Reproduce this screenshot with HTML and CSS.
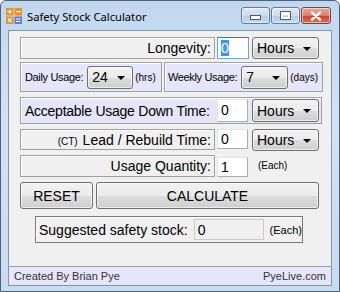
FILE: index.html
```html
<!DOCTYPE html>
<html>
<head>
<meta charset="utf-8">
<title>Safety Stock Calculator</title>
<link rel="stylesheet" href="styles.css">
</head>
<body>
<div class="window">
  <div class="titlebar">
    <svg class="appicon" width="16" height="16" viewBox="0 0 16 16">
      <rect x="0" y="0" width="7.5" height="7.5" fill="#e8902a"/>
      <rect x="8.5" y="0" width="7.5" height="7.5" fill="#e8902a"/>
      <rect x="0" y="8.5" width="7.5" height="7.5" fill="#e8902a"/>
      <rect x="8.5" y="8.5" width="7.5" height="7.5" fill="#6a78c8"/>
      <path d="M3.7 1.5v4.5M1.5 3.7h4.5" stroke="#fff" stroke-width="1.2"/>
      <path d="M10 3.7h4.5" stroke="#fff" stroke-width="1.2"/>
      <path d="M2 10.5l3.5 3.5M5.5 10.5l-3.5 3.5" stroke="#fff" stroke-width="1.2"/>
      <path d="M10 11h4.5M10 13.5h4.5" stroke="#fff" stroke-width="1.2"/>
    </svg>
    <span class="title">Safety Stock Calculator</span>
    <div class="caption-buttons">
      <div class="cbtn cmin"><span class="min-glyph"></span></div>
      <div class="cbtn cmax"><span class="max-glyph"></span></div>
      <div class="cbtn cclose">
        <svg width="12" height="10" viewBox="0 0 12 10"><path d="M2 1.5l8 7M10 1.5l-8 7" stroke="#fff" stroke-width="2.4" stroke-linecap="round"/></svg>
      </div>
    </div>
  </div>
  <div class="client">
    <div class="form">
      <div class="row r1">
        <div class="panel lpanel"><span class="lbl">Longevity:</span></div>
        <div class="textbox focused"><span class="sel">0</span></div>
        <div class="combo hours">Hours<span class="arrow"></span></div>
      </div>
      <div class="row r2">
        <div class="panel lav p-daily">
          <span class="slbl">Daily Usage:</span>
          <div class="combo small c-daily">24<span class="arrow"></span></div>
          <span class="unit">(hrs)</span>
        </div>
        <div class="panel lav p-weekly">
          <span class="slbl">Weekly Usage:</span>
          <div class="combo small c-weekly">7<span class="arrow"></span></div>
          <span class="unit">(days)</span>
        </div>
      </div>
      <div class="row r3">
        <div class="panel lav p-down">
          <span class="lbl down-lbl">Acceptable Usage Down Time:</span>
          <div class="textbox">0</div>
          <div class="combo hours">Hours<span class="arrow"></span></div>
        </div>
      </div>
      <div class="row r4">
        <div class="panel lpanel"><span class="lbl"><span class="ct">(CT)</span> Lead / Rebuild Time:</span></div>
        <div class="textbox t-lead">0</div>
        <div class="combo hours">Hours<span class="arrow"></span></div>
      </div>
      <div class="row r5">
        <div class="panel lpanel"><span class="lbl">Usage Quantity:</span></div>
        <div class="textbox t-qty">1</div>
        <span class="unit each">(Each)</span>
      </div>
      <div class="row r6">
        <div class="button reset">RESET</div>
        <div class="button calc">CALCULATE</div>
      </div>
      <div class="row r7">
        <div class="group">
          <span class="lbl">Suggested safety stock:</span>
          <div class="textbox readonly">0</div>
          <span class="unit each2">(Each)</span>
        </div>
      </div>
    </div>
    <div class="statusbar">
      <span>Created By Brian Pye</span>
      <span>PyeLive.com</span>
    </div>
  </div>
</div>
</body>
</html>
```

FILE: styles.css
```css
html, body {
  margin: 0;
  padding: 0;
  background: #ffffff;
}

.window {
  width: 340px;
  height: 292px;
  box-sizing: border-box;
  border: 1px solid #4a6480;
  border-radius: 6px 6px 0 0;
  background: linear-gradient(180deg, #c2d7ee 0%, #d3e2f3 40%, #c9dbef 100%);
  display: flex;
  flex-direction: column;
  overflow: hidden;
  font-family: "Liberation Sans", Arial, sans-serif;
  color: #000;
}

.titlebar {
  height: 29px;
  display: flex;
  align-items: center;
  padding-left: 5px;
  flex: none;
}

.appicon {
  flex: none;
  margin-top: 1px;
}

.title {
  font-family: "Noto Sans", "Open Sans", sans-serif;
  font-size: 11.2px;
  margin-left: 5px;
  color: #000;
  margin-top: 1px;
}

.caption-buttons {
  margin-left: auto;
  display: flex;
  align-self: flex-start;
  margin-top: 6px;
  margin-right: 8px;
  gap: 1px;
}

.cbtn {
  height: 17px;
  box-sizing: border-box;
  border: 1px solid #5f7c9e;
  border-radius: 3px;
  display: flex;
  align-items: center;
  justify-content: center;
  box-shadow: inset 0 0 0 1px rgba(255,255,255,0.55);
}

.cmin, .cmax {
  width: 29px;
  background: linear-gradient(180deg, #dfe9f5 0%, #cbdcef 50%, #b4cbe6 51%, #c6d9ef 100%);
}

.cclose {
  width: 30px;
  border-color: #8a3a30;
  background: linear-gradient(180deg, #e9a99a 0%, #dc7e69 50%, #c7452e 51%, #d5705a 100%);
}

.min-glyph {
  width: 9px;
  height: 3px;
  margin-top: 4px;
  background: #fff;
  border: 1px solid #4a5d78;
}

.max-glyph {
  width: 5px;
  height: 2px;
  background: transparent;
  border: 2px solid #fff;
  border-top-width: 3px;
  outline: 1px solid #4a5d78;
  box-sizing: content-box;
}

.client {
  flex: 1;
  margin: 0 7px 5px 7px;
  background: #f0f0f0;
  border: 1px solid #8097b3;
  display: flex;
  flex-direction: column;
}

.form {
  flex: 1;
  padding: 6px 0 0 11px;
  display: flex;
  flex-direction: column;
}

.row {
  display: flex;
  align-items: flex-start;
  flex: none;
}

.r1 { height: 22px; }
.r2 { height: 30px; margin-top: 3px; }
.r3 { height: 27px; margin-top: 5px; }
.r4 { height: 21px; margin-top: 5px; }
.r5 { height: 22px; margin-top: 5px; }
.r6 { height: 27px; margin-top: 5px; }
.r7 { height: 27px; margin-top: 7px; padding-left: 15px; }

.panel {
  box-sizing: border-box;
  height: 100%;
  border: 1px solid #a0a0a0;
  box-shadow: inset 1px 1px 0 #ffffff;
  display: flex;
  align-items: center;
}

.lpanel {
  width: 195px;
  justify-content: flex-end;
  padding-right: 3px;
  background: #f0f0f0;
}

.lav {
  background: #e6e6fa;
}

.lbl {
  font-size: 14px;
  white-space: nowrap;
}

.down-lbl {
  width: 187px;
  letter-spacing: -0.25px;
}

.ct {
  font-size: 10px;
  margin-right: 1px;
}

.slbl {
  font-size: 11px;
  letter-spacing: -0.35px;
  white-space: nowrap;
}

.unit {
  font-size: 10px;
  white-space: nowrap;
}

.p-daily {
  width: 142px;
  padding-left: 4px;
}

.p-weekly {
  width: 159px;
  margin-left: 2px;
  padding-left: 3px;
}

.p-down {
  width: 302px;
  padding-left: 4px;
}

.p-down .textbox {
  margin-left: 5px;
  width: 31px;
  height: 23px;
}

.p-down .combo {
  margin-left: 4px;
  height: 23px;
}

.textbox {
  box-sizing: border-box;
  width: 32px;
  height: 22px;
  background: #ffffff;
  border: 1px solid #abadb3;
  border-top-color: #e2e3ea;
  border-left-color: #e2e3ea;
  font-size: 14px;
  padding: 2px 0 0 3px;
  margin-left: 2px;
  line-height: 16px;
}

.textbox.focused {
  border: 1px solid #6fa4d8;
  border-top-color: #3d7bad;
}

.sel {
  background: #3399ff;
  color: #ffffff;
}

.t-lead { height: 20px; padding-top: 1px; width: 31px; }
.t-qty { height: 20px; margin-top: 2px; padding-top: 1px; width: 31px; }

.combo {
  box-sizing: border-box;
  width: 67px;
  height: 22px;
  margin-left: 3px;
  border: 1px solid #707070;
  border-radius: 3px;
  background: linear-gradient(180deg, #f2f2f2 0%, #ebebeb 50%, #dddddd 51%, #cfcfcf 100%);
  box-shadow: inset 0 0 0 1px rgba(255,255,255,0.6);
  display: flex;
  align-items: center;
  padding-left: 4px;
  font-size: 14px;
}

.t-lead + .combo { margin-left: 4px; }

.arrow {
  margin-left: auto;
  margin-right: 7px;
  width: 0;
  height: 0;
  border-left: 4px solid transparent;
  border-right: 4px solid transparent;
  border-top: 4px solid #000;
  margin-top: 1px;
}

.combo.small {
  height: 23px;
  margin: 0 2px 0 4px;
}

.c-daily { width: 46px; }
.c-weekly { width: 47px; margin-left: 3px; }

.each { margin-left: 10px; margin-top: 5px; font-size: 10px; }

.button {
  box-sizing: border-box;
  height: 27px;
  border: 1px solid #707070;
  border-radius: 3px;
  background: linear-gradient(180deg, #f2f2f2 0%, #ebebeb 50%, #dddddd 51%, #cfcfcf 100%);
  box-shadow: inset 0 0 0 1px rgba(255,255,255,0.6);
  display: flex;
  align-items: center;
  justify-content: center;
  font-size: 14px;
}

.reset { width: 73px; }
.calc { width: 223px; margin-left: 3px; }

.group {
  box-sizing: border-box;
  width: 268px;
  height: 27px;
  border: 1px solid #7a7a7a;
  box-shadow: inset 1px 1px 0 #ffffff;
  display: flex;
  align-items: center;
  padding-left: 3px;
}

.group .textbox {
  width: 70px;
  height: 21px;
  margin-left: 6px;
  background: #f0f0f0;
  border-color: #c9c9c9;
}

.each2 {
  margin-left: 6px;
  font-size: 11px;
}

.statusbar {
  flex: none;
  height: 18px;
  border-top: 1px solid #a0a0a0;
  background: #e6e6fa;
  display: flex;
  justify-content: space-between;
  align-items: center;
  padding: 0 5px 0 5px;
  font-size: 11px;
  color: #333;
}
```
